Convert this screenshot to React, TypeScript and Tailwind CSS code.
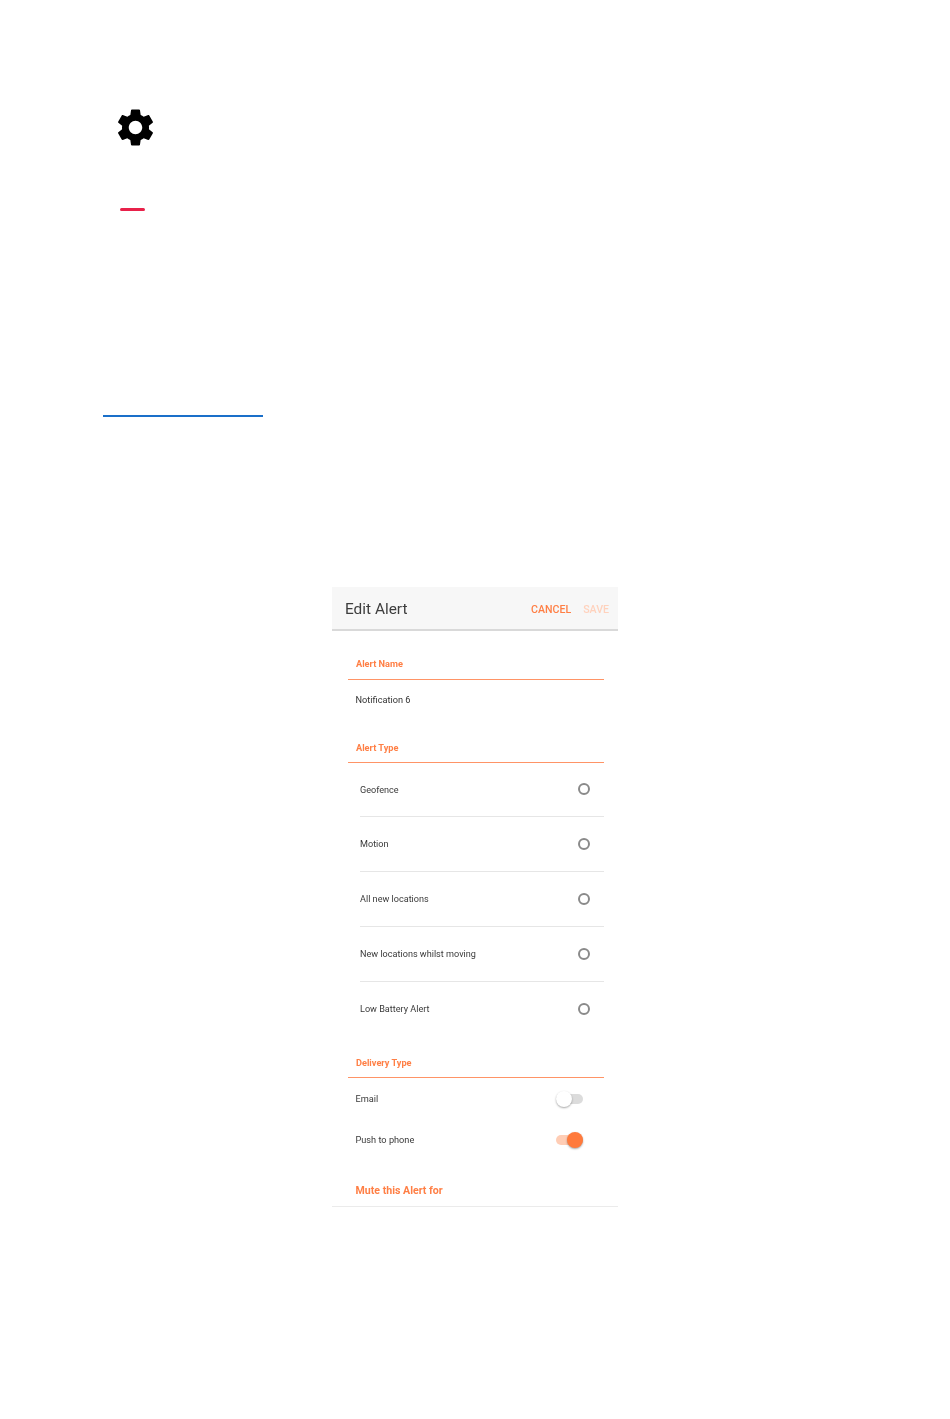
const F = "font-['Roboto',sans-serif]";

function Section({ title, mt, leading }: { title: string; mt: string; leading: string }) {
  return (
    <div className={`${mt} ${leading} ml-4 mr-[14px] h-[26px] border-b border-b-[#ff9466] pl-2 text-[9.2px] font-bold text-[#ff7f45]`}>
      {title}
    </div>
  );
}

function Radio({ label, last }: { label: string; last?: boolean }) {
  return (
    <div className={`ml-7 mr-[14px] flex h-[54.8px] items-center justify-between pr-[14px] ${last ? "" : "border-b border-[#e6e6e6]"}`}>
      <span className="mt-[2px] text-[9.1px] text-[#3a3a3a]">{label}</span>
      <span className="h-[12px] w-[12px] rounded-full border-2 border-[#8a8a8a]" />
    </div>
  );
}

function Toggle({ on }: { on?: boolean }) {
  return (
    <span className={`relative block h-[10px] w-[27px] rounded-full ${on ? "bg-[#ffcdb5]" : "bg-[#dcdcdc]"}`}>
      <span
        className={`absolute top-[-3px] h-[16px] w-[16px] rounded-full shadow-[0_1px_2px_rgba(0,0,0,0.35)] ${on ? "right-0 bg-[#ff7a3c]" : "left-0 bg-white"}`}
      />
    </span>
  );
}

export default function App() {
  return (
    <div className={`${F} min-h-[1419px] bg-white blur-[0.35px]`}>
      <div className="pl-[113px] pt-[105px]">
        <svg viewBox="0 0 24 24" className="block h-[45px] w-[45px] fill-black">
          <path d="M19.14,12.94c0.04-0.3,0.06-0.61,0.06-0.94c0-0.32-0.02-0.64-0.07-0.94l2.03-1.58c0.18-0.14,0.23-0.41,0.12-0.61l-1.92-3.32c-0.12-0.22-0.37-0.29-0.59-0.22l-2.39,0.96c-0.5-0.38-1.03-0.7-1.62-0.94L14.4,2.81c-0.04-0.24-0.24-0.41-0.48-0.41h-3.84c-0.24,0-0.43,0.17-0.47,0.41L9.25,5.35C8.66,5.59,8.12,5.92,7.63,6.29L5.24,5.33c-0.22-0.08-0.47,0-0.59,0.22L2.74,8.87C2.62,9.08,2.66,9.34,2.86,9.48l2.03,1.58C4.84,11.36,4.8,11.69,4.8,12s0.02,0.64,0.07,0.94l-2.03,1.58c-0.18,0.14-0.23,0.41-0.12,0.61l1.92,3.32c0.12,0.22,0.37,0.29,0.59,0.22l2.39-0.96c0.5,0.38,1.03,0.7,1.62,0.94l0.36,2.54c0.05,0.24,0.24,0.41,0.48,0.41h3.84c0.24,0,0.44-0.17,0.47-0.41l0.36-2.54c0.59-0.24,1.13-0.56,1.62-0.94l2.39,0.96c0.22,0.08,0.47,0,0.59-0.22l1.92-3.32c0.12-0.22,0.07-0.47-0.12-0.61L19.14,12.94z M12,15.6c-1.98,0-3.6-1.62-3.6-3.6s1.62-3.6,3.6-3.6s3.6,1.62,3.6,3.6S13.98,15.6,12,15.6z" />
        </svg>
      </div>
      <div className="ml-[120px] mt-[58px] h-[3px] w-[25px] rounded-full bg-[#e8214a]" />
      <div className="ml-[103px] mt-[203.5px] h-[2px] w-[160px] bg-[#1a6fc9]" />

      <div className="ml-[332px] mt-[170px] w-[286px] border-b border-[#ebebeb] pb-[7px]">
        <div className="flex h-[44px] items-center justify-between border-b-2 border-[#d9d9d9] bg-[#f7f7f7] pl-[13px] pr-[9px] pt-[4px]">
          <span className="text-[15.4px] text-[#3d3d3d]">Edit Alert</span>
          <div className="flex gap-3 text-[10.6px] font-medium">
            <span className="text-[#ff7f45]">CANCEL</span>
            <span className="text-[#ffd2bd]">SAVE</span>
          </div>
        </div>

        <Section title="Alert Name" mt="mt-[23px]" leading="leading-[20px]" />
        <div className="flex h-[41px] items-center pl-[23.5px] text-[9.2px] text-[#333]">Notification 6</div>
        <Section title="Alert Type" mt="mt-[16px]" leading="leading-[22px]" />
        <Radio label="Geofence" />
        <Radio label="Motion" />
        <Radio label="All new locations" />
        <Radio label="New locations whilst moving" />
        <Radio label="Low Battery Alert" last />
        <Section title="Delivery Type" mt="mt-[16px]" leading="leading-[22px]" />

        <div className="flex h-[41px] items-center justify-between pl-[23.5px] pr-[35px] text-[9.2px] text-[#3a3a3a]">
          <span>Email</span>
          <Toggle />
        </div>
        <div className="flex h-[41px] items-center justify-between pl-[23.5px] pr-[35px] text-[9.2px] text-[#3a3a3a]">
          <span>Push to phone</span>
          <Toggle on />
        </div>
        <div className="mt-[23px] pl-[23.5px] text-[10.6px] leading-[16px] font-bold text-[#ff7f45]">Mute this Alert for</div>
      </div>
    </div>
  );
}
